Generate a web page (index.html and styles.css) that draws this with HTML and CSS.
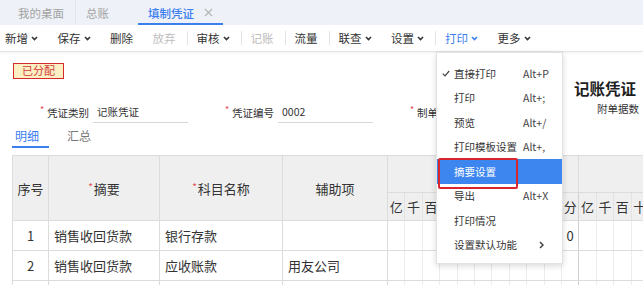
FILE: index.html
```html
<!DOCTYPE html>
<html lang="zh-CN">
<head>
<meta charset="utf-8">
<title>填制凭证</title>
<link rel="stylesheet" href="styles.css">
</head>
<body>
<nav class="tabbar">
  <span class="tab first">我的桌面</span>
  <span class="tab">总账</span>
  <span class="tab active">填制凭证<svg class="close" width="9" height="9" viewBox="0 0 9 9"><path d="M1 1L8 8M8 1L1 8"/></svg></span>
</nav>
<div class="toolbar">
  <span class="tb">新增<svg class="chev" width="7" height="5" viewBox="0 0 7 5"><path d="M1 1L3.5 3.5L6 1"/></svg></span>
  <span class="tb">保存<svg class="chev" width="7" height="5" viewBox="0 0 7 5"><path d="M1 1L3.5 3.5L6 1"/></svg></span>
  <span class="tb">删除</span>
  <span class="tb off">放弃</span>
  <span class="sep"></span>
  <span class="tb">审核<svg class="chev" width="7" height="5" viewBox="0 0 7 5"><path d="M1 1L3.5 3.5L6 1"/></svg></span>
  <span class="sep"></span>
  <span class="tb off">记账</span>
  <span class="sep"></span>
  <span class="tb">流量</span>
  <span class="sep"></span>
  <span class="tb">联查<svg class="chev" width="7" height="5" viewBox="0 0 7 5"><path d="M1 1L3.5 3.5L6 1"/></svg></span>
  <span class="tb">设置<svg class="chev" width="7" height="5" viewBox="0 0 7 5"><path d="M1 1L3.5 3.5L6 1"/></svg></span>
  <span class="sep"></span>
  <span class="tb on">打印<svg class="chev" width="7" height="5" viewBox="0 0 7 5"><path d="M1 1L3.5 3.5L6 1"/></svg></span>
  <span class="tb">更多<svg class="chev" width="7" height="5" viewBox="0 0 7 5"><path d="M1 1L3.5 3.5L6 1"/></svg></span>
</div>
<main class="content">
  <div class="badge-row"><span class="badge">已分配</span></div>
  <div class="title-row"><h1 class="title">记账凭证</h1></div>
  <div class="form-row">
    <div class="field"><i class="req">*</i><span class="label">凭证类别</span><span class="val">记账凭证</span></div>
    <div class="field"><i class="req">*</i><span class="label">凭证编号</span><span class="val">0002</span></div>
    <div class="field"><i class="req">*</i><span class="label">制单日期</span><span class="val">2021-01-31</span></div>
    <div class="field attach"><span class="label">附单据数</span></div>
  </div>
  <div class="subtabs"><span class="subtab on">明细</span><span class="subtab">汇总</span></div>
  <table class="grid">
    <colgroup>
      <col class="c-no"><col class="c-desc"><col class="c-acct"><col class="c-aux">
      <col class="m"><col class="m"><col class="m"><col class="m"><col class="m"><col class="m"><col class="m"><col class="m"><col class="m"><col class="m"><col class="m">
      <col class="m"><col class="m"><col class="m"><col class="m"><col class="m"><col class="m"><col class="m"><col class="m"><col class="m"><col class="m"><col class="m">
    </colgroup>
    <thead>
      <tr class="h1">
        <th rowspan="2">序号</th>
        <th rowspan="2"><i class="star">*</i>摘要</th>
        <th rowspan="2"><i class="star">*</i>科目名称</th>
        <th rowspan="2">辅助项</th>
        <th colspan="11" class="grp">借方金额</th>
        <th colspan="11" class="grp">贷方金额</th>
      </tr>
      <tr class="h2">
        <th>亿</th><th>千</th><th>百</th><th>十</th><th>万</th><th>千</th><th>百</th><th>十</th><th>元</th><th>角</th><th class="end">分</th>
        <th>亿</th><th>千</th><th>百</th><th>十</th><th>万</th><th>千</th><th>百</th><th>十</th><th>元</th><th>角</th><th class="end">分</th>
      </tr>
    </thead>
    <tbody>
      <tr>
        <td class="no">1</td><td>销售收回货款</td><td>银行存款</td><td></td>
        <td></td><td></td><td></td><td></td><td></td><td></td><td></td><td></td><td></td><td></td><td class="d end">0</td>
        <td></td><td></td><td></td><td></td><td></td><td></td><td></td><td></td><td></td><td></td><td class="end"></td>
      </tr>
      <tr>
        <td class="no">2</td><td>销售收回货款</td><td>应收账款</td><td>用友公司</td>
        <td></td><td></td><td></td><td></td><td></td><td></td><td></td><td></td><td></td><td></td><td class="end"></td>
        <td></td><td></td><td></td><td></td><td></td><td></td><td></td><td></td><td></td><td></td><td class="end"></td>
      </tr>
      <tr>
        <td class="no"></td><td></td><td></td><td></td>
        <td></td><td></td><td></td><td></td><td></td><td></td><td></td><td></td><td></td><td></td><td class="end"></td>
        <td></td><td></td><td></td><td></td><td></td><td></td><td></td><td></td><td></td><td></td><td class="end"></td>
      </tr>
    </tbody>
  </table>
</main>
<ul class="menu">
  <li class="mi"><span class="ck"><svg width="8" height="7" viewBox="0 0 8 7"><path d="M0.8 3.6L3 5.8L7.2 1"/></svg></span><span class="ml">直接打印</span><span class="key">Alt+P</span></li>
  <li class="mi"><span class="ck"></span><span class="ml">打印</span><span class="key">Alt+;</span></li>
  <li class="mi"><span class="ck"></span><span class="ml">预览</span><span class="key">Alt+/</span></li>
  <li class="mi"><span class="ck"></span><span class="ml">打印模板设置</span><span class="key">Alt+,</span></li>
  <li class="mi hl"><span class="ck"></span><span class="ml">摘要设置</span><span class="key"></span></li>
  <li class="mi"><span class="ck"></span><span class="ml">导出</span><span class="key">Alt+X</span></li>
  <li class="mi"><span class="ck"></span><span class="ml">打印情况</span><span class="key"></span></li>
  <li class="mi"><span class="ck"></span><span class="ml">设置默认功能</span><span class="key arrow"><svg width="5" height="8" viewBox="0 0 5 8"><path d="M1 1L4 4L1 7"/></svg></span></li>
</ul>
</body>
</html>
```

FILE: styles.css
```css
* { box-sizing: border-box; }
html, body { margin: 0; padding: 0; }
body {
  width: 643px;
  height: 285px;
  overflow: hidden;
  background: #fff;
  font-family: "Noto Sans CJK SC", "Microsoft YaHei", "Noto Sans", sans-serif;
  color: #333;
  position: relative;
}

/* top tabs */
.tabbar {
  height: 25px;
  background: #eef1f7;
  display: flex;
  align-items: stretch;
  padding-left: 8px;
  font-size: 11.5px;
}
.tab {
  display: flex;
  align-items: center;
  padding: 0 10px;
  color: #a3a3a3;
  border-bottom: 2px solid transparent;
  padding-top: 2px;
}
.tab.first { border-right: 1px solid #e3e6ec; padding-right: 11px; }
.tab.active {
  margin-left: 19px;
  color: #3b7ef0;
  font-weight: 500;
  border-bottom-color: #3b7ef0;
  gap: 10px;
}
.close { stroke: #b5b5b5; stroke-width: 1.2; fill: none; }

/* toolbar */
.toolbar {
  height: 27px;
  display: flex;
  align-items: center;
  padding-left: 5px;
  font-size: 11.5px;
  color: #333;
  border-bottom: 1px solid #e4e4e4;
  box-shadow: 0 1px 2px rgba(0,0,0,0.05);
}
.tb { display: flex; align-items: center; gap: 3px; white-space: nowrap; }
.tb + .tb { margin-left: 19.5px; }
.tb.off { color: #bdbdbd; }
.tb.on { color: #3b7ef0; }
.chev { stroke: currentColor; stroke-width: 1.6; fill: none; }
.sep { width: 1px; height: 14px; background: #e3e3e3; margin: 0 9px 0 11px; }

/* content */
.content { padding: 4px 0 0 12px; }
.badge-row { height: 16px; }
.badge {
  display: inline-block;
  margin-left: 1px;
  height: 16px;
  line-height: 13px;
  padding: 0 8px;
  border: 1.5px solid #d42a2a;
  background: #fcefc4;
  color: #d23a3a;
  font-size: 11px;
}
.title-row {
  display: flex;
  justify-content: flex-end;
  padding-right: 7px;
  margin-top: 6px;
}
.title {
  margin: 0;
  font-size: 15.5px;
  line-height: 20px;
  font-weight: 700;
  color: #1e1e1e;
}
.form-row {
  display: flex;
  align-items: flex-start;
  margin-top: 4px;
  padding-left: 28px;
  font-size: 10.5px;
  gap: 37px;
  white-space: nowrap;
}
.field { display: flex; align-items: center; height: 21px; }
.req {
  font-style: normal;
  color: #e5484d;
  font-size: 9px;
  width: 7px;
  align-self: flex-start;
  line-height: 16px;
}
.label { color: #333; margin-right: 4px; }
.val {
  width: 95px;
  height: 21px;
  line-height: 20px;
  padding-left: 4px;
  border-bottom: 1px solid #d6d6d6;
  color: #333;
}
.field.attach { margin-left: 2px; margin-top: -4px; }

.subtabs {
  display: flex;
  margin-top: 5px;
  font-size: 12px;
  line-height: 16px;
}
.subtab {
  padding: 0 10px 2px 3px;
  border-bottom: 2px solid transparent;
  color: #777;
}
.subtab.on { color: #3b7ef0; border-bottom-color: #3b7ef0; margin-right: 15px; }

/* grid */
.grid {
  margin-top: 7px;
  border-collapse: collapse;
  table-layout: fixed;
  width: 758px;
  font-size: 13px;
}
.c-no { width: 36px; }
.c-desc { width: 111px; }
.c-acct { width: 123px; }
.c-aux { width: 105px; }
.m { width: 17.4px; }
.grid th, .grid td {
  border: 1px solid #dcdcdc;
  padding: 0;
  white-space: nowrap;
  overflow: hidden;
}
.grid th { background: #efefef; font-weight: 400; color: #333; text-align: center; }
.grid .h1 { height: 37px; }
.grid .h1 th.grp { color: #efefef; }
.grid .h2 { height: 28px; }
.grid .h2 th { border-left-color: #e3e3e3; border-right-color: #e3e3e3; }
.grid tbody tr { height: 30px; }
.grid td { padding-left: 5px; color: #333; }
.grid td.no { text-align: center; padding-left: 0; }
.grid tbody td:nth-child(n+5) { padding: 0; text-align: center; border-left-color: #ececec; border-right-color: #ececec; }
.grid .end { border-right-color: #d0d0d0 !important; }
.star { font-style: normal; color: #e5484d; font-size: 10px; vertical-align: 3px; margin-right: 1px; }

/* dropdown menu (overlay) */
.menu {
  position: absolute;
  left: 436px;
  top: 52px;
  width: 127px;
  margin: 0;
  padding: 8px 0 6px;
  list-style: none;
  background: #fff;
  border: 1px solid #e2e2e2;
  box-shadow: 0 2px 6px rgba(0,0,0,0.15);
  font-size: 10.5px;
  color: #333;
}
.mi {
  position: relative;
  display: flex;
  align-items: center;
  height: 24.5px;
  padding-left: 5px;
  white-space: nowrap;
}
.ck { width: 12px; display: flex; align-items: center; }
.ck svg { stroke: #444; stroke-width: 1.2; fill: none; }
.ml { width: 69px; }
.key { color: #444; }
.key.arrow { margin-left: 16px; display: flex; }
.key.arrow svg { stroke: #444; stroke-width: 1.5; fill: none; }
.mi.hl { background: #3d86f0; color: #fff; }
.mi.hl::after {
  content: "";
  position: absolute;
  left: 1px;
  top: -1px;
  width: 76px;
  height: 27px;
  border: 2px solid #d8262e;
  border-radius: 2px;
}
```
